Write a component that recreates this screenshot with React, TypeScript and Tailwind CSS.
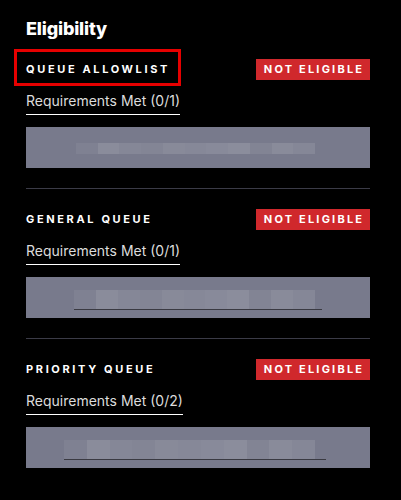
import React from "react";

type Queue = {
  name: string;
  met: string;
  highlight?: boolean;
  strip: { left: number; width: number; line?: { left: number; width: number } };
};

const queues: Queue[] = [
  { name: "QUEUE ALLOWLIST", met: "Requirements Met (0/1)", highlight: true, strip: { left: 50, width: 239 } },
  { name: "GENERAL QUEUE", met: "Requirements Met (0/1)", strip: { left: 48, width: 241, line: { left: 48, width: 248 } } },
  { name: "PRIORITY QUEUE", met: "Requirements Met (0/2)", strip: { left: 38, width: 251, line: { left: 38, width: 262 } } },
];

// blurred placeholder cells
const cells = ["#7f8192", "#8a8c9b", "#858797", "#838595", "#888a99", "#868898", "#888a9a", "#8b8d9c", "#828494", "#898b9a", "#858797"];

function BlurStrip({ strip, tall }: { strip: Queue["strip"]; tall: boolean }) {
  return (
    <div className="relative h-[41px] w-full bg-[#787a8c]">
      <div
        className={`absolute flex ${tall ? "top-[13px] h-[19px]" : "top-[16px] h-[11px]"}`}
        style={{ left: strip.left, width: strip.width }}
      >
        {cells.map((c, i) => (
          <div key={i} className="h-full flex-1" style={{ background: c }} />
        ))}
      </div>
      {strip.line && (
        <div
          className="absolute top-[32px] h-px bg-[#3a3a42]"
          style={{ left: strip.line.left, width: strip.line.width }}
        />
      )}
    </div>
  );
}

export default function App() {
  return (
    <div className="w-[401px] h-[500px] bg-black pl-[26px] pr-[31px] pt-[18px] text-white" style={{ fontFamily: 'Inter, "Liberation Sans", sans-serif' }}>
      <h2 className="text-[18px] leading-[22px] font-extrabold tracking-[-0.01em]">Eligibility</h2>
      <div className="mt-[19px] flex flex-col">
        {queues.map((q, i) => (
          <div key={q.name}>
            {i > 0 && <div className="mt-[20px] mb-[20px] h-px bg-[#3b3b47]" />}
            <div className="relative flex h-[21px] items-center justify-between">
              <span className="text-[11px] font-bold tracking-[0.24em]">{q.name}</span>
              {q.highlight && (
                <span className="absolute left-[-12px] top-[-10px] h-[37px] w-[167px] border-[3px] border-[#e60000]" />
              )}
              <span className="flex h-[21px] w-[114px] items-center justify-center bg-[#d0282c] pl-[2px] text-[11px] font-bold tracking-[0.2em]">
                NOT ELIGIBLE
              </span>
            </div>
            <div className="mt-[11px] flex">
              <span className="border-b border-white pb-[3px] text-[14px] leading-[20px] text-[#dcdcdc]">{q.met}</span>
            </div>
            <div className="mt-[12px]">
              <BlurStrip strip={q.strip} tall={i > 0} />
            </div>
          </div>
        ))}
      </div>
    </div>
  );
}
